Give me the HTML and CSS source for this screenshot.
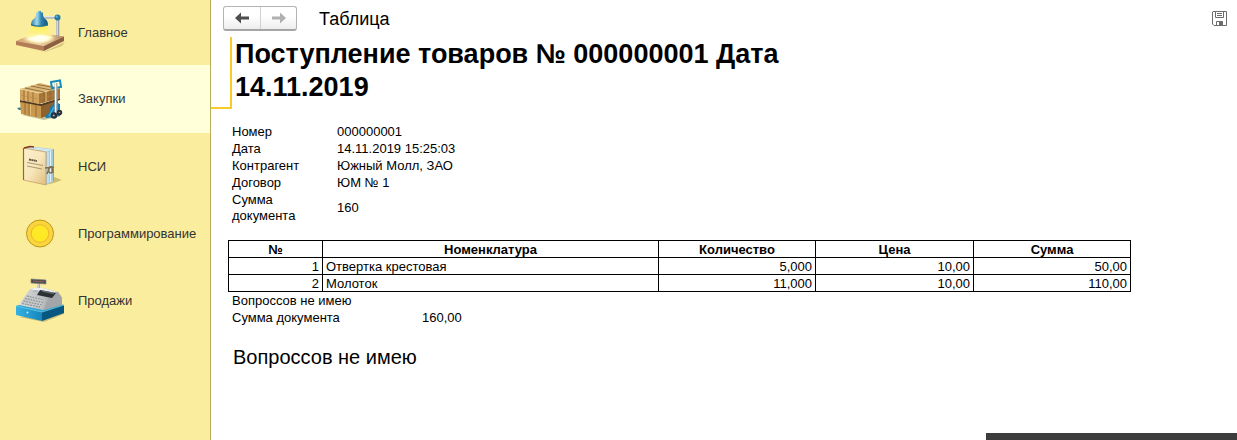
FILE: index.html
```html
<!DOCTYPE html>
<html lang="ru">
<head>
<meta charset="utf-8">
<title>Таблица</title>
<link rel="stylesheet" href="styles.css">
</head>
<body>
<div class="app">
  <nav class="sections">
    <a class="section section-first" href="#main">
      <svg class="section-icon" viewBox="0 0 80 66" aria-hidden="true">
        <defs>
          <linearGradient id="beam" x1="0" y1="0" x2="0" y2="1"><stop offset="0" stop-color="#fff04a"/><stop offset="1" stop-color="#fff9a8" stop-opacity=".6"/></linearGradient>
          <linearGradient id="shade" x1="0" y1="0" x2="1" y2="0"><stop offset="0" stop-color="#2c7fa9"/><stop offset=".35" stop-color="#a5d8ea"/><stop offset=".6" stop-color="#2e85b0"/><stop offset="1" stop-color="#155273"/></linearGradient>
          <linearGradient id="wood" x1="0" y1="0" x2="1" y2="0"><stop offset="0" stop-color="#d3a174"/><stop offset=".5" stop-color="#efd3a9"/><stop offset="1" stop-color="#b98a62"/></linearGradient>
          <radialGradient id="glow"><stop offset="0" stop-color="#fff"/><stop offset=".6" stop-color="#fffbd0"/><stop offset="1" stop-color="#fff3a0" stop-opacity="0"/></radialGradient>
        </defs>
        <path d="M19 45 44 52 65 42 62 46 45 52Z" fill="#b9a76c" opacity=".6"/>
        <path d="M16 41 36 32.500 64 36.500 44 46Z" fill="url(#wood)"/>
        <path d="M16 41 44 46V51L16 45Z" fill="#b27d57"/>
        <path d="M44 46 64 36.500V41L44 51Z" fill="#8d5f42"/>
        <ellipse cx="39" cy="38" rx="17" ry="6" fill="url(#glow)"/>
        <path d="M28 39 39 35 51 37 42 41.500Z" fill="#fffef0"/>
        <path d="M32 26H47L53 38Q40 43 26 36Z" fill="url(#beam)" opacity=".8"/>
        <path d="M29 39 39 35 51 37 42 41.500Z" fill="#fffff3" opacity=".9"/>
        <path d="M43 17.500H56" stroke="#a9b2ba" stroke-width="2.500"/><path d="M43 16.700H56" stroke="#edf2f5"/>
        <path d="M57.800 18V36" stroke="#9ea2ad" stroke-width="3"/><path d="M57.300 20V35" stroke="#e4e6ed"/>
        <circle cx="57.500" cy="17.500" r="3" fill="#237ba3"/><circle cx="56.800" cy="16.600" r="1.200" fill="#62b0cd"/>
        <path d="M36 15V12.500H38V11H41V12.500H43V15L44 18Q48 20 48 25Q40 28 31 25Q31 20 35 18Z" fill="url(#shade)"/>
        <path d="M31 24Q39 27 48 24V25.500Q39 28 31 25.500Z" fill="#246f94"/>
      </svg>
      <span>Главное</span>
    </a>
    <a class="section section-current" href="#purchases" aria-current="page">
      <svg class="section-icon" viewBox="0 0 80 66" aria-hidden="true">
        <path d="M17 42 34 39V43L19 44Z" fill="#387b94"/>
        <path d="M22 49 44 54 61 50 58 46Z" fill="#8c8055" opacity=".5"/>
        <path d="M20 35 41 39V52L21 48Z" fill="#c9984f"/><path d="M41 39 58 33V46L41 52Z" fill="#8d6230"/>
        <path d="M20 34 41 38 60 32V34L41 40 20 36Z" fill="#513b23"/>
        <path d="M20 23 40 17 60 22 39 27Z" fill="#dcb976"/>
        <path d="M20 23 39 27V38L20 34Z" fill="#d2a35d"/><path d="M39 27 60 22V32L39 38Z" fill="#a47438"/>
        <path d="M20 23 39 27 60 22" fill="none" stroke="#efd197"/>
        <path d="M25 22 44 26M31 20 51 24M37 18.500 57 22" stroke="#967042" stroke-width="1.200"/>
        <path d="M24 24V35M28 25V36M33 26V37M44 26V36.500M50 24.500V35M56 23V33M25 37V48.500M29 38V49.500M36 39V51M45 39V50.500M50 37V48" stroke="#8e622e" stroke-width=".8"/>
        <path d="M26 24.500V35M30.500 38V49M46 26V36" stroke="#e4bd76"/>
        <path d="M21 29 38 33M42 32 59 28" stroke="#b98442" stroke-width=".6"/>
        <path d="M50 42 55 36 60 38V50L54 51 46 52 45 50Q50 48 50 42Z" fill="#147eb4"/>
        <path d="M54 41 49 50" stroke="#48aeda" stroke-width="1.500"/>
        <path d="M51 16 60 14.500 61 21 52 22.500Z" fill="none" stroke="#198bb9" stroke-width="2"/>
        <path d="M56 17V48" stroke="#a3acb2" stroke-width="3"/><path d="M55.500 17V48" stroke="#f4f6f8" stroke-width="1.200"/>
        <circle cx="54" cy="49.500" r="3.200" fill="#24303a"/><circle cx="59.500" cy="46.500" r="2.700" fill="#24303a"/>
        <circle cx="53.700" cy="49.500" r="1.100" fill="#9fa8ad"/><circle cx="59.500" cy="46.500" r=".8" fill="#9fa8ad"/>
      </svg>
      <span>Закупки</span>
    </a>
    <a class="section" href="#reference">
      <svg class="section-icon" viewBox="0 0 80 66" aria-hidden="true">
        <defs><linearGradient id="cover" x1="0" y1="0" x2="1" y2="1"><stop offset="0" stop-color="#fbefce"/><stop offset=".5" stop-color="#f8e7bb"/><stop offset="1" stop-color="#e0bd7e"/></linearGradient></defs>
        <path d="M45 51 54 43 62 46 54 49Z" fill="#b39d55" opacity=".6"/>
        <path d="M24 14 30 12.500 54 15 46 18Z" fill="#a8cddc"/>
        <path d="M30 13.500 52 16M28 14.500 49 17" stroke="#e9f7fc" stroke-width=".8"/>
        <path d="M46 18 54 15V47L46 51Z" fill="#a5cddd"/>
        <path d="M48 18V49M50.500 17V48" stroke="#def2f8"/>
        <path d="M53.500 15V47" stroke="#be9c61"/>
        <path d="M23.500 14 46 18V51L23.500 46Z" fill="url(#cover)" stroke="#c79c62" stroke-width=".8"/>
        <path d="M23.500 14V46" stroke="#9d6336" stroke-width="1.200"/>
        <path d="M24 14 30 12.500 34 13" fill="none" stroke="#803d23" stroke-width="1.500"/>
        <path d="M29 25.500 37 27" stroke="#655442" stroke-width="1.800" stroke-dasharray="2 .4"/>
        <path d="M27 28.500 43 31.500M27 32 42 35" stroke="#a48c68" stroke-width=".9"/>
        <path d="M45 34 54 33M48 36Q51 30 53 36Q51 42 48 36M49 35 47 40M52 35 53 39" fill="none" stroke="#806f50" stroke-width="1.600"/>
      </svg>
      <span>НСИ</span>
    </a>
    <a class="section" href="#programming">
      <svg class="section-icon" viewBox="0 0 80 66" aria-hidden="true">
        <circle cx="40" cy="32.500" r="13.500" fill="#fcd43e" stroke="#b79a16"/>
        <circle cx="40" cy="32.500" r="8.800" fill="#ffe927" stroke="#e8b92a"/>
      </svg>
      <span>Программирование</span>
    </a>
    <a class="section" href="#sales">
      <svg class="section-icon" viewBox="0 0 80 66" aria-hidden="true">
        <defs>
          <linearGradient id="till" x1="0" y1="0" x2="1" y2="0"><stop offset="0" stop-color="#dedfe0"/><stop offset=".6" stop-color="#b6b8ba"/><stop offset="1" stop-color="#777a7e"/></linearGradient>
          <linearGradient id="drawer" x1="0" y1="0" x2="1" y2="0"><stop offset="0" stop-color="#35b1e1"/><stop offset="1" stop-color="#1685bc"/></linearGradient>
        </defs>
        <path d="M19 49 44 54 64 46V43Z" fill="#a09054" opacity=".5"/>
        <path d="M16 38 37 31 64 37 42 44Z" fill="#2fa2d0"/>
        <path d="M16 38 42 44V53L16 47Z" fill="url(#drawer)"/><path d="M42 44 64 37V45L42 53Z" fill="#075781"/>
        <path d="M16 38 42 44 64 37" fill="none" stroke="#54c5e8" stroke-width=".8"/>
        <path d="M19 36 30 21 39 19 58 24 62 30V37L43 42 19 37Z" fill="url(#till)"/>
        <path d="M43 42 48 32 58 24 62 30V37Z" fill="#a3a6a9"/>
        <path d="M30 21 39 19 58 24 49 26Z" fill="#efefef"/>
        <path d="M40 22 56 25 52 30 37 27Z" fill="#2c3032"/><path d="M42 23 54 25.500" stroke="#646b6f" stroke-width="1.500"/>
        <path d="M27 27 45 31 41 39 21 35Z" fill="#c9cbcb"/>
        <path d="M27 28 44 32M25 30.500 43 34.500M23.500 33 42 37M22 35.500 40 39" stroke="#8f9395" stroke-width="1.300" stroke-dasharray="1.800 1"/>
        <path d="M32 23 37 22 39 23 34 24Z" fill="#aab6bd"/>
        <path d="M38.500 14V20" stroke="#a8adb0" stroke-width="3"/><path d="M38 15V20" stroke="#f1f2f3"/>
        <path d="M31 11 46 12V16L31 15Z" fill="#474b4e" stroke="#828485" stroke-width=".7"/>
        <path d="M33 13 44 14" stroke="#b26556" stroke-width=".8"/>
        <circle cx="27.500" cy="44.500" r="1" fill="#c8eef8"/>
      </svg>
      <span>Продажи</span>
    </a>
  </nav>

  <main class="workspace">
    <header class="toolbar">
      <div class="history">
        <button class="history-button" type="button" aria-label="Назад">
          <svg class="arrow" viewBox="0 0 14 12" aria-hidden="true"><path d="M0 6 6 .5V4.500H14V7.500H6V11.500Z"/></svg>
        </button>
        <button class="history-button history-forward" type="button" aria-label="Вперед" disabled>
          <svg class="arrow" viewBox="0 0 14 12" aria-hidden="true"><path d="M14 6 8 .5V4.500H0V7.500H8V11.500Z"/></svg>
        </button>
      </div>
      <div class="window-title">Таблица</div>
      <button class="save" type="button" aria-label="Сохранить">
        <svg class="save-icon" viewBox="0 0 15 15" aria-hidden="true">
          <path d="M.5 1V13L2 14.500H14.500V.5H1Z" fill="#fff" stroke="#6c6c6c"/>
          <path d="M3.500 .5V6.500H11.500V.5M5 2.500H10M5 4.500H10M4.500 14.500V10.500H10.500V14.500" fill="none" stroke="#6c6c6c"/>
          <path d="M7 11H10V14H7Z" fill="#6c6c6c"/>
        </svg>
      </button>
    </header>

    <div class="sheet-head">
      <div class="cell-marker"></div>
      <h1 class="doc-title">Поступление товаров № 000000001 Дата 14.11.2019</h1>
    </div>

    <div class="sheet">
      <dl class="details">
        <dt>Номер</dt><dd>000000001</dd>
        <dt>Дата</dt><dd>14.11.2019 15:25:03</dd>
        <dt>Контрагент</dt><dd>Южный Молл, ЗАО</dd>
        <dt>Договор</dt><dd>ЮМ № 1</dd>
        <dt>Сумма документа</dt><dd>160</dd>
      </dl>
      <table class="goods">
        <colgroup><col class="col-number"><col><col class="col-value"><col class="col-price"><col class="col-value"></colgroup>
        <thead><tr><th>№</th><th>Номенклатура</th><th>Количество</th><th>Цена</th><th>Сумма</th></tr></thead>
        <tbody>
          <tr><td>1</td><td class="name">Отвертка крестовая</td><td>5,000</td><td>10,00</td><td>50,00</td></tr>
          <tr><td>2</td><td class="name">Молоток</td><td>11,000</td><td>10,00</td><td>110,00</td></tr>
        </tbody>
      </table>
      <p class="note">Вопроссов не имею</p>
      <dl class="total"><dt>Сумма документа</dt><dd>160,00</dd></dl>
      <p class="remark">Вопроссов не имею</p>
    </div>
  </main>
</div>
<div class="edge-panel"></div>
</body>
</html>
```
FILE: styles.css
```css
* { box-sizing: border-box; }
body {
  margin: 0;
  background: #fff;
  color: #000;
  font: 13px/16px "Liberation Sans", Arial, sans-serif;
}
h1, p, dl, dd { margin: 0; }
.app { display: flex; min-height: 100vh; }

.sections {
  flex: none;
  width: 211px;
  background: #fbed9e;
  border-right: 1px solid #bbad5e;
}
.section {
  display: flex;
  align-items: center;
  height: 67px;
  color: #333;
  text-decoration: none;
}
.section-first { height: 65px; }
.section-current { height: 68px; background: #ffffd9; }
.section-icon { flex: none; width: 80px; height: 66px; margin-right: -2px; }

.workspace { flex: 1; min-width: 0; }
.toolbar {
  display: flex;
  align-items: center;
  height: 37px;
  padding: 0 10px 0 12px;
}
.history {
  display: flex;
  height: 25px;
  border: 1px solid #b4b4b4;
  border-bottom: 2px solid #a5a5a5;
  border-radius: 3px;
  background: linear-gradient(#fff 40%, #ededed);
}
.history-button {
  display: flex;
  align-items: center;
  justify-content: center;
  width: 36px;
  padding: 0;
  border: 0;
  background: none;
}
.history-forward { border-left: 1px solid #d0d0d0; }
.arrow { width: 14px; height: 12px; fill: #4d4d4d; }
.history-forward .arrow { fill: #b0b0b0; }
.window-title { margin-left: 22px; font-size: 18px; line-height: 24px; }
.save {
  display: flex;
  margin-left: auto;
  padding: 0;
  border: 0;
  background: none;
}
.save-icon { width: 15px; height: 15px; }

.sheet-head { display: flex; align-items: flex-start; }
.cell-marker {
  flex: none;
  width: 21px;
  height: 72px;
  border: solid #fcca26;
  border-width: 0 2px 2px 0;
}
.doc-title {
  max-width: 600px;
  padding: 1px 0 0 3px;
  font-size: 27px;
  line-height: 33px;
}

.sheet { padding: 14px 106px 0 17px; }
.details {
  display: grid;
  grid-template-columns: 80px 1fr;
  column-gap: 25px;
  align-items: center;
  padding-left: 4px;
}
.details dt, .details dd { padding-top: 1px; }
.goods {
  width: 100%;
  margin-top: 16px;
  table-layout: fixed;
  border-collapse: collapse;
}
.col-number { width: 94px; }
.col-value { width: 157px; }
.col-price { width: 158px; }
.goods th, .goods td {
  height: 17px;
  padding: 1px 3px 0;
  border: 1px solid #000;
  line-height: 15px;
}
.goods td { text-align: right; }
.goods .name { text-align: left; }
.note, .total { padding: 1px 0 0 4px; }
.total { display: grid; grid-template-columns: 190px 1fr; }
.remark { padding: 19px 0 0 5px; font-size: 20px; line-height: 24px; }

.edge-panel {
  position: fixed;
  right: 0;
  bottom: 0;
  width: 251px;
  height: 7px;
  background: #3c3c3c;
}
```
